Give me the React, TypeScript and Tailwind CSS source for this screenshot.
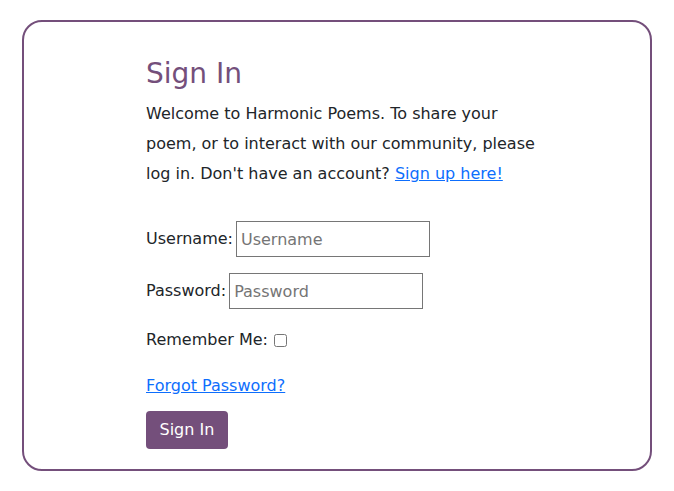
export default function App() {
  return (
    <div className="min-h-screen bg-white pt-5 px-[22px] font-['DejaVu_Sans',sans-serif] text-[16px] text-[#212529]">
      <div className="rounded-[20px] border-2 border-[#744f7b] pt-[35px] pb-[20px]">
        <div className="ml-[122px] w-[392px]">
          <h1 className="mb-[8px] text-[28px] leading-[34px] font-medium text-[#744f7b]">Sign In</h1>
          <p className="leading-[30px]">
            Welcome to Harmonic Poems. To share your poem, or to interact with our community, please log in.
            Don't have an account?{" "}
            <a href="#" className="text-[#0d6efd] underline">
              Sign up here!
            </a>
          </p>

          <form className="mt-[32px]" onSubmit={(e) => e.preventDefault()}>
            <div className="flex items-center">
              <label htmlFor="id_login">Username:</label>
              <input
                id="id_login"
                type="text"
                placeholder="Username"
                className="ml-[3px] h-9 w-[194px] border border-[#767676] px-1 text-[16px] placeholder:text-[#757575] outline-none"
              />
            </div>
            <div className="mt-4 flex items-center">
              <label htmlFor="id_password">Password:</label>
              <input
                id="id_password"
                type="password"
                placeholder="Password"
                className="ml-[3px] h-9 w-[194px] border border-[#767676] px-1 text-[16px] placeholder:text-[#757575] outline-none"
              />
            </div>
            <div className="mt-4 flex items-center leading-[30px]">
              <label htmlFor="id_remember">Remember Me:</label>
              <input id="id_remember" type="checkbox" className="ml-[6px] h-[13px] w-[13px]" />
            </div>
            <div className="mt-4 leading-[30px]">
              <a href="#" className="text-[#0d6efd] underline">
                Forgot Password?
              </a>
            </div>
            <button
              type="submit"
              className="mt-[10px] h-[38px] rounded bg-[#744f7b] px-[13.5px] text-white"
            >
              Sign In
            </button>
          </form>
        </div>
      </div>
    </div>
  );
}
